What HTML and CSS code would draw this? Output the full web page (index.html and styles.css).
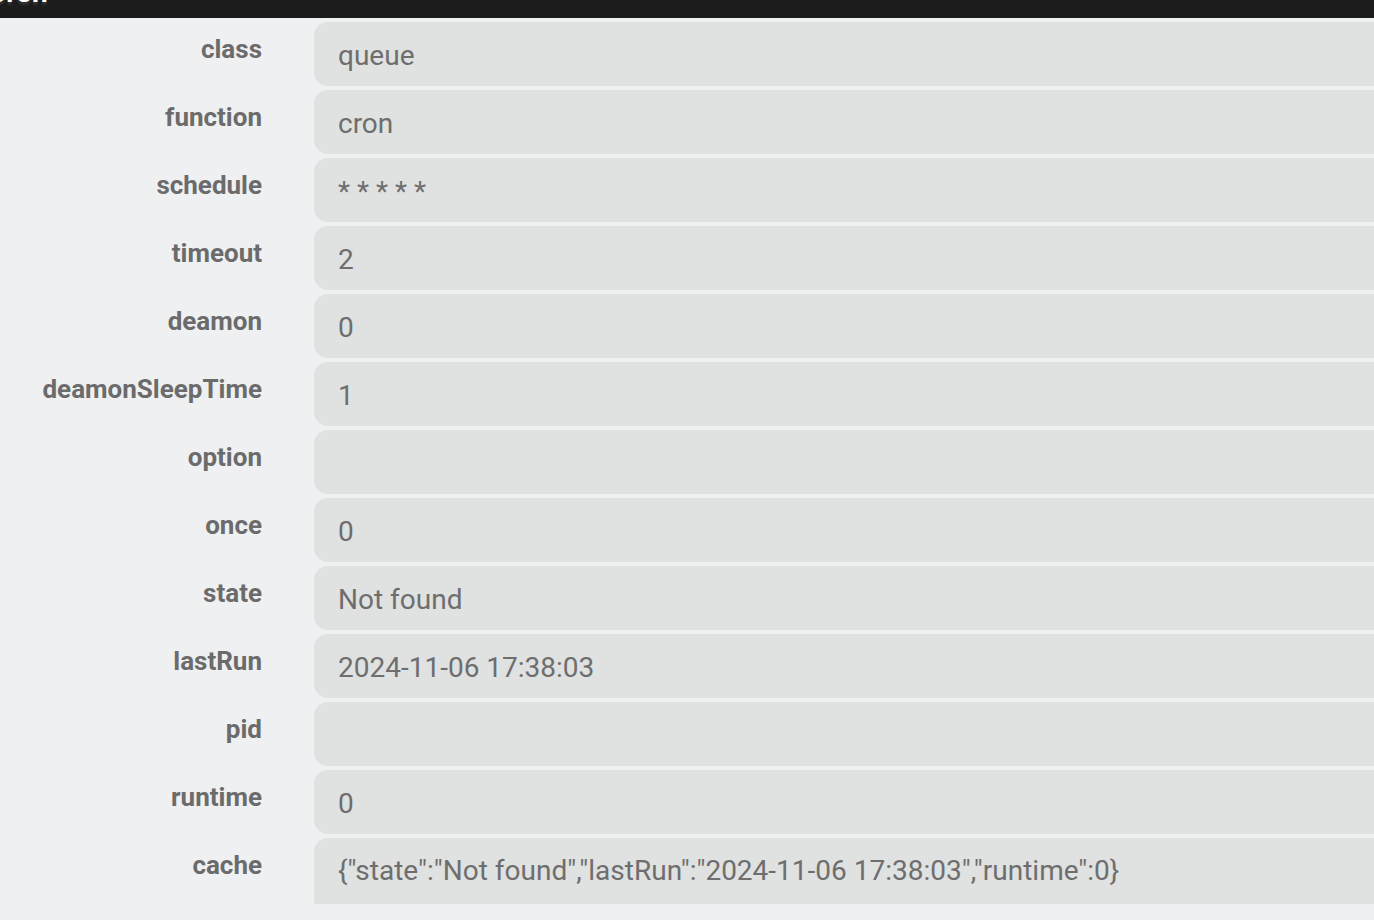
FILE: index.html
```html
<!DOCTYPE html>
<html>
<head>
<meta charset="utf-8">
<link rel="stylesheet" href="styles.css">
</head>
<body>
<header class="topbar"><h1 class="title">Cron</h1></header>
<main class="form">
  <div class="row"><label class="label">class</label><div class="field">queue</div></div>
  <div class="row"><label class="label">function</label><div class="field">cron</div></div>
  <div class="row"><label class="label">schedule</label><div class="field">* * * * *</div></div>
  <div class="row"><label class="label">timeout</label><div class="field">2</div></div>
  <div class="row"><label class="label">deamon</label><div class="field">0</div></div>
  <div class="row"><label class="label">deamonSleepTime</label><div class="field">1</div></div>
  <div class="row"><label class="label">option</label><div class="field"></div></div>
  <div class="row"><label class="label">once</label><div class="field">0</div></div>
  <div class="row"><label class="label">state</label><div class="field">Not found</div></div>
  <div class="row"><label class="label">lastRun</label><div class="field">2024-11-06 17:38:03</div></div>
  <div class="row"><label class="label">pid</label><div class="field"></div></div>
  <div class="row"><label class="label">runtime</label><div class="field">0</div></div>
  <div class="row"><label class="label">cache</label><div class="field field-area">{"state":"Not found","lastRun":"2024-11-06 17:38:03","runtime":0}</div></div>
</main>
</body>
</html>
```

FILE: styles.css
```css
html, body {
  margin: 0;
  padding: 0;
  overflow: hidden;
}
body {
  background: #eff0f2;
  font-family: Roboto, "Liberation Sans", sans-serif;
  width: 1374px;
  height: 920px;
}
.topbar {
  height: 18px;
  background: #1c1c1c;
  overflow: hidden;
}
.title {
  margin: -27px 0 0 -12px;
  font-size: 28px;
  line-height: 40px;
  font-weight: 700;
  color: #ffffff;
  text-shadow: 0 3px 2px #333333;
}
.form {
  display: flex;
  flex-direction: column;
  gap: 4px;
  padding-top: 4px;
  width: 1420px;
}
.row {
  display: grid;
  grid-template-columns: 262px 1fr;
  column-gap: 52px;
}
.label {
  text-align: right;
  font-weight: 700;
  font-size: 26px;
  line-height: 30px;
  padding-top: 12px;
  color: #6b6b6b;
}
.field {
  height: 62px;
  line-height: 64px;
  padding-top: 2px;
  background: #e0e1e1;
  border-radius: 14px;
  padding-left: 24px;
  font-size: 28px;
  color: #6e6e6e;
  white-space: pre;
  overflow: hidden;
}
.field-area {
  height: 64px;
  line-height: 62px;
  border-radius: 14px 14px 0 0;
}
```
